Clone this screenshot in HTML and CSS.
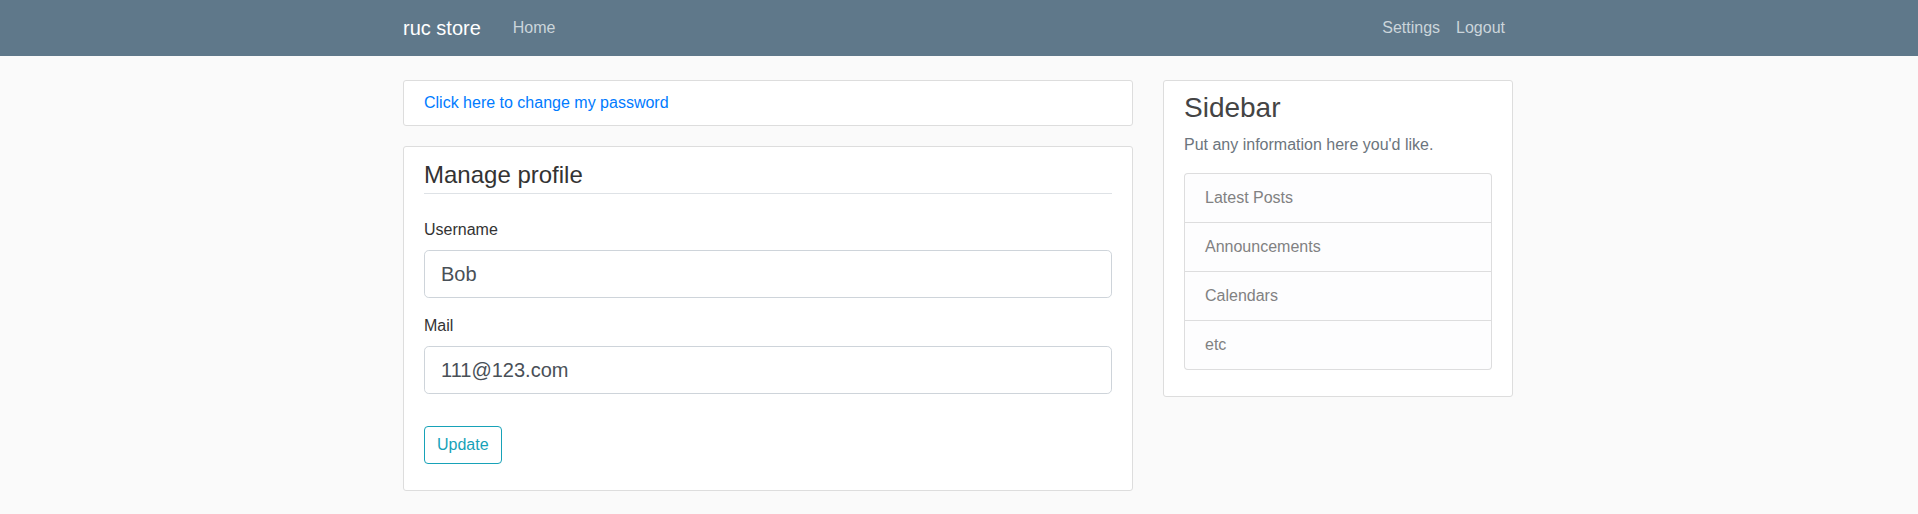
FILE: index.html
```html
<!DOCTYPE html>
<html lang="en">
<head>
<meta charset="utf-8">
<title>ruc store</title>
<link rel="stylesheet" href="styles.css">
</head>
<body>
<header class="site-header">
  <nav class="navbar">
    <div class="container nav-inner">
      <a class="brand" href="#">ruc store</a>
      <div class="nav-group">
        <a class="nav-link" href="#">Home</a>
      </div>
      <div class="nav-group nav-right">
        <a class="nav-link" href="#">Settings</a>
        <a class="nav-link" href="#">Logout</a>
      </div>
    </div>
  </nav>
</header>
<main class="container main">
  <div class="row">
    <div class="col-main">
      <div class="content-section">
        <a class="link" href="#">Click here to change my password</a>
      </div>
      <div class="content-section">
        <form>
          <fieldset class="fieldset">
            <legend class="legend">Manage profile</legend>
            <div class="form-group">
              <label class="form-label" for="username">Username</label>
              <input class="form-control" id="username" type="text" value="Bob">
            </div>
            <div class="form-group">
              <label class="form-label" for="mail">Mail</label>
              <input class="form-control" id="mail" type="text" value="111@123.com">
            </div>
          </fieldset>
          <div class="form-group">
            <button class="btn-outline" type="button">Update</button>
          </div>
        </form>
      </div>
    </div>
    <div class="col-side">
      <div class="content-section">
        <h3 class="side-title">Sidebar</h3>
        <p class="muted">Put any information here you'd like.</p>
        <ul class="list-group">
          <li class="list-item">Latest Posts</li>
          <li class="list-item">Announcements</li>
          <li class="list-item">Calendars</li>
          <li class="list-item">etc</li>
        </ul>
      </div>
    </div>
  </div>
</main>
</body>
</html>
```

FILE: styles.css
```css
* {
  box-sizing: border-box;
}

body {
  margin: 0;
  background: #fafafa;
  color: #333333;
  font-family: "Liberation Sans", Arial, sans-serif;
  font-size: 16px;
  line-height: 1.5;
}

.container {
  width: 100%;
  max-width: 1140px;
  margin-left: max(0px, calc(50% - 571px));
  margin-right: auto;
  padding: 0 15px;
}

/* Navbar */
.navbar {
  background-color: #5f788a;
  padding: 8px 16px;
}

.nav-inner {
  display: flex;
  align-items: center;
}

.brand {
  display: inline-block;
  font-size: 20px;
  line-height: 30px;
  padding: 5px 0;
  margin-right: 24px;
  color: #ffffff;
  text-decoration: none;
  white-space: nowrap;
}

.nav-group {
  display: flex;
}

.nav-right {
  margin-left: auto;
}

.nav-link {
  display: block;
  padding: 8px;
  line-height: 24px;
  color: #cbd5db;
  text-decoration: none;
}

/* Main */
.main {
  margin-top: 24px;
}

.row {
  display: flex;
  margin: 0 -15px;
}

.col-main {
  flex: 0 0 66.666667%;
  max-width: 66.666667%;
  padding: 0 15px;
}

.col-side {
  flex: 0 0 33.333333%;
  max-width: 33.333333%;
  padding: 0 15px;
}

.content-section {
  background: #ffffff;
  padding: 10px 20px;
  border: 1px solid #dddddd;
  border-radius: 3px;
  margin-bottom: 20px;
}

.link {
  color: #007bff;
  text-decoration: none;
}

/* Form */
.fieldset {
  min-width: 0;
  padding: 0;
  margin: 0 0 16px;
  border: 0;
}

.legend {
  display: block;
  width: 100%;
  padding: 0;
  margin: 0 0 24px;
  font-size: 24px;
  line-height: 36px;
  color: inherit;
  border-bottom: 1px solid #dee2e6;
}

.form-group {
  margin-bottom: 16px;
}

.form-label {
  display: block;
  margin-bottom: 8px;
  line-height: 24px;
}

.form-control {
  display: block;
  width: 100%;
  height: 48px;
  padding: 8px 16px;
  font-family: inherit;
  font-size: 20px;
  line-height: 30px;
  color: #495057;
  background: #ffffff;
  border: 1px solid #ced4da;
  border-radius: 4.8px;
  outline: none;
}

.btn-outline {
  display: inline-block;
  padding: 6px 12px;
  font-family: inherit;
  font-size: 16px;
  line-height: 24px;
  color: #17a2b8;
  background: transparent;
  border: 1px solid #17a2b8;
  border-radius: 4px;
}

/* Sidebar */
.side-title {
  margin: 0 0 8px;
  font-size: 28px;
  font-weight: 500;
  line-height: 1.2;
  color: #444444;
}

.muted {
  margin: 0 0 16px;
  color: #6c757d;
}

.list-group {
  display: flex;
  flex-direction: column;
  list-style: none;
  margin: 0 0 16px;
  padding: 0;
}

.list-item {
  padding: 12px 20px;
  line-height: 24px;
  color: #818182;
  background-color: #fdfdfe;
  border: 1px solid rgba(0, 0, 0, 0.125);
}

.list-item + .list-item {
  border-top-width: 0;
}

.list-item:first-child {
  border-top-left-radius: 4px;
  border-top-right-radius: 4px;
}

.list-item:last-child {
  border-bottom-left-radius: 4px;
  border-bottom-right-radius: 4px;
}
```
